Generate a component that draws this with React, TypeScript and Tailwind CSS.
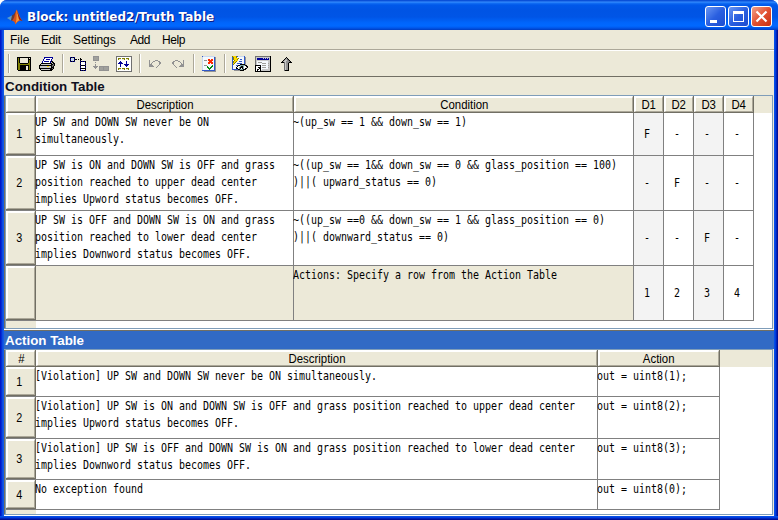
import React from "react";

const palette: Record<string, string> = {
  K: "#000000",
  O: "#808000",
  W: "#ffffff",
  G: "#a0a09c",
  D: "#707070",
  N: "#000098",
  B: "#3058c8",
  L: "#c8d8f0",
  P: "#f4f8fc",
  R: "#ff2a00",
  E: "#008a10",
  Y: "#ffd800",
  T: "#80a8a8",
  S: "#c8c8c8",
  C: "#ece9d8",
  A: "#929292",
};

function Pixels({ rows }: { rows: string[] }) {
  const rects: React.ReactElement[] = [];
  rows.forEach((row, y) => {
    let x = 0;
    while (x < row.length) {
      const c = row[x];
      let n = 1;
      while (row[x + n] === c) n++;
      if (palette[c]) rects.push(<rect key={x + "," + y} x={x} y={y} width={n} height={1} fill={palette[c]} />);
      x += n;
    }
  });
  const w = Math.max(...rows.map((r) => r.length));
  return (
    <svg width={w} height={rows.length} shapeRendering="crispEdges" className="block shrink-0">
      {rects}
    </svg>
  );
}

const save = [
  "KKKKKKKKKKKKKK",
  "KOKCCCCCCCCKCK",
  "KOKCCCCCCCCKKK",
  "KOKCCCCCCCCKOK",
  "KOKCCCCCCCCKOK",
  "KOKCCCCCCCCKOK",
  "KOOKKKKKKKKOOK",
  "KOOOOOOOOOOOOK",
  "KOOKKKKKKKKKOK",
  "KOOKKKKKKCCKOK",
  "KOOKKKKKKCCKOK",
  "KOOKKKKKKCCKOK",
  "KOOKKKKKKCCKOK",
  " KKKKKKKKKKKKK",
];
const printer = [
  "     NNNNNNNNN  ",
  "     NWWWWWWWN  ",
  "    NWWNNNNWN   ",
  "    NWWWWWWWN   ",
  "   NWNNNNNWNKK  ",
  "   NWWWWWWWNSKK ",
  "  KKKKKKKKKKKSKK",
  " KSSSSSSSSSSKKDK",
  "KKKKKKKKKKKKKDDK",
  "KSSSSSSSYYSSKDK ",
  "KSSSSSSSSSSSKKK ",
  "KKKKKKKKKKKKKDK ",
  " KSSSSSSSSSKKK  ",
  "  KKKKKKKKKKK   ",
];
const appendRow = [
  "NKNKN           ",
  "KLLLK     K     ",
  "NLLLNKK K KK    ",
  "KLLLK     K     ",
  "NKNKN     NKNKNK",
  "          KWWWWK",
  "          NWWWWN",
  "          KWWWWK",
  "          NKKKKN",
  "          KWWWWK",
  "          NWWWWN",
  "          KKKKKK",
  "          NWWWWK",
  "          KNKNKN",
];
const appendColumn = [
  "AAAAAA          ",
  "AGGGGA          ",
  "AGGGGA          ",
  "AGGGGA          ",
  "AAAAAA          ",
  "                ",
  "  A             ",
  "                ",
  "  A             ",
  "  A             ",
  "AAAAA AAAAAAAAAA",
  " AAA  AGGGAGGGGA",
  "  A   AGGGAGGGGA",
  "      AGGGAGGGGA",
  "      AAAAAAAAAA",
];
const compact = [
  "DDDDDDDDDDDDDDDD",
  "DWWWWWWWWWWWWWWD",
  "DWOOOWOOOWOOOWWD",
  "DWOCCWCCOWCCOWWD",
  "DWWWWWWWWWWWWWWD",
  "DWWWNWWWWWNWWWWD",
  "DWWNNNWWWWNWWWWD",
  "DWNNNNNWWWNWWWWD",
  "DWWWNWWWNNNNNWWD",
  "DWWWNWWWWNNNWWWD",
  "DWWWNWWWWWNWWWWD",
  "DWWWWWWWWWWWWWWD",
  "DWOOOWOOOWOOOWWD",
  "DWOCCWCCOWCCOWWD",
  "DWWWWWWWWWWWWWWD",
  "DDDDDDDDDDDDDDDD",
];
const undo = [
  "A     AAA   ",
  "A   AA   AA ",
  "A  A      AA",
  "A A       AA",
  "AAA       A ",
  "AAAA     A  ",
  "AAAAA   A   ",
  "       A    ",
];
const redo = undo.map((r) => r.split("").reverse().join(""));
const check = [
  "BLLLLLLLLLLLL  ",
  "LPPPPPPPPPPPBA ",
  "LPPPPPPPPPPPBA ",
  "LPPPPPRRPRRPBA ",
  "LPAAAPRRRRRPBA ",
  "LPPPPPPRRRPPBA ",
  "LPPPPPRRRRRPBA ",
  "LPPPPPRRPRRPBA ",
  "LPPPPPPPPPPPBA ",
  "LPAAAPPPPPEPBA ",
  "LPPPPEPPPEEPBA ",
  "LPPPPEEPEEPPBA ",
  "LPPPPPEEEPPPBA ",
  "LPPPPPPEPPPPBA ",
  "BBBBBBBBBBBBBA ",
  "  AAAAAAAAAAAA ",
];
const view = [
  "OYYYOBLLLLLLB   ",
  "BOYYOPPPPPPPBA  ",
  "BOYYYYOPPPPPBA  ",
  "BOYYYOPPBBPPBA  ",
  "BPOYYYPPPPPPBA  ",
  "BOYYOPPBBBPPBA  ",
  "BOYOPPPPPPPPBA  ",
  "BYOPPBBBBBPPBA  ",
  "BOPPPPPPKKKKKA  ",
  "BPPPBBKKTTTTTKK ",
  "BPPPPKWWTKKTWWKK",
  "BPPPKWWTKKKTWWSK",
  "BPPPKKWTKWKTWKK ",
  "BBBBBBKKTTTKKK  ",
  "  AAAAAAKKKK    ",
];
const windowIcon = [
  "DDDDDDDDDDDDDDDK",
  "DSSSSSSSSSSSSSSK",
  "DSNNNNNNSNSNSNSK",
  "DSNNNNNNNNNNNNSK",
  "DSSSSSSSSSSSSSSK",
  "DSPPPPPPPPPPPSSK",
  "DSPGGGGPPPPPPSSK",
  "DSPPPPPGGGGPPGSK",
  "DSPPPPPPPPPPPSSK",
  "KKKKKKPGGGGPPGSK",
  "KWWWWKPPPPPPPSSK",
  "KWWKKKPGGGGPPGSK",
  "KWWWKKPPPPPPPSSK",
  "KWKKWKPSSSSSSSSK",
  "KWKWWKSSSSSSSSSK",
  "KKKKKKKKKKKKKKKK",
];
const upArrow = [
  "      K      ",
  "     KGK     ",
  "    KGGDK    ",
  "   KGSSADK   ",
  "  KGSSAAADK  ",
  " KKKDSAADKKK ",
  "    DSAAK    ",
  "    DSAAK    ",
  "    DSAAK    ",
  "    DSAAK    ",
  "    DSAAK    ",
  "    DSAAK    ",
  "    DSAAK    ",
  "    DKKKK    ",
];

function Sep() {
  return <div className="h-[19px] w-[2px] shrink-0 border-l border-[#aca899] bg-white" />;
}

const ui = "font-['Liberation_Sans',Arial,sans-serif] text-[12px]";
const raised =
  "border-t-2 border-l-2 border-r border-b border-t-white border-l-white border-r-[#aca899] border-b-[#aca899] bg-[#ece9d8]";

function Mono({ children }: { children: string }) {
  return (
    <span className="-ml-px block w-max origin-left scale-x-[0.8305] font-['DejaVu_Sans_Mono',monospace] text-[12px] leading-[17px] whitespace-pre">
      {children}
    </span>
  );
}

function Lines({ text, className }: { text: string[]; className: string }) {
  return (
    <div className={"min-w-0 shrink-0 border-r border-b border-[#808080] pt-px " + className}>
      {text.map((t, i) => (
        <Mono key={i}>{t}</Mono>
      ))}
    </div>
  );
}

function Head({ children, className }: { children?: string; className: string }) {
  return (
    <div className={"h-[17px] shrink-0 border-r border-b border-[#716f64] " + className}>
      <div className={"flex h-full items-center justify-center pt-px leading-[12px] " + ui + " " + raised}>
        <span className="scale-x-[0.95]">{children}</span>
      </div>
    </div>
  );
}

function RowHead({ children }: { children?: string }) {
  return (
    <div className="w-[30px] shrink-0 border-b border-[#808080]">
      <div className="h-full border-r border-b border-[#716f64]">
        <div className={"flex h-full items-center justify-center pr-[3px] " + ui + " " + raised}>
          <span className="scale-x-[0.9]">{children}</span>
        </div>
      </div>
    </div>
  );
}

function Decision({ value, shaded }: { value: string; shaded: boolean }) {
  return (
    <div
      className={
        "flex w-[30px] shrink-0 items-center border-r border-b border-[#808080] pl-[11px] " + (shaded ? "bg-[#f3f3f3]" : "bg-white")
      }
    >
      <Mono>{value}</Mono>
    </div>
  );
}

const conditions = [
  {
    h: "h-[43px]",
    id: "1",
    desc: ["UP SW and DOWN SW never be ON", "simultaneously."],
    cond: ["~(up_sw == 1 && down_sw == 1)"],
    d: ["F", "-", "-", "-"],
    fill: "bg-white",
  },
  {
    h: "h-[55px]",
    id: "2",
    desc: ["UP SW is ON and DOWN SW is OFF and grass", "position reached to upper dead center", "implies Upword status becomes OFF."],
    cond: ["~((up_sw == 1&& down_sw == 0 && glass_position == 100)", ")||( upward_status == 0)"],
    d: ["-", "F", "-", "-"],
    fill: "bg-white",
  },
  {
    h: "h-[55px]",
    id: "3",
    desc: ["UP SW is OFF and DOWN SW is ON and grass", "position reached to lower dead center", "implies Downword status becomes OFF."],
    cond: ["~((up_sw ==0 && down_sw == 1 && glass_position == 0)", ")||( downward_status == 0)"],
    d: ["-", "-", "F", "-"],
    fill: "bg-white",
  },
  {
    h: "h-[55px]",
    id: "",
    desc: [],
    cond: ["Actions: Specify a row from the Action Table"],
    d: ["1", "2", "3", "4"],
    fill: "bg-[#ece9d8]",
  },
];

const actions = [
  { h: "h-[30px]", id: "1", desc: ["[Violation] UP SW and DOWN SW never be ON simultaneously."], act: "out = uint8(1);" },
  {
    h: "h-[42px]",
    id: "2",
    desc: [
      "[Violation] UP SW is ON and DOWN SW is OFF and grass position reached to upper dead center",
      "implies Upword status becomes OFF.",
    ],
    act: "out = uint8(2);",
  },
  {
    h: "h-[41px]",
    id: "3",
    desc: [
      "[Violation] UP SW is OFF and DOWN SW is ON and grass position reached to lower dead center",
      "implies Downword status becomes OFF.",
    ],
    act: "out = uint8(3);",
  },
  { h: "h-[30px]", id: "4", desc: ["No exception found"], act: "out = uint8(0);" },
];

function Logo() {
  return (
    <svg width="16" height="16" viewBox="0 0 16 16" className="shrink-0">
      <path d="M0 9 L5 6.5 L7 8.5 L4 11.5Z" fill="#5b9bc8" />
      <path d="M5 6.5 L7 5 L9.5 1 L8 9 L5 12 L4 11Z" fill="#6b3a34" />
      <path d="M9.5 0.5 C11.5 3 12.5 9 15.5 12 C13 11 11.5 11.5 8.5 15.5 C8 13 6.500 11.5 5 12 C7.500 10 8 4 9.500 .5Z" fill="#d85018" />
      <path d="M9.500 1 C9.500 5 10 10 8.500 15 C10.500 12 11.500 11 13 11 C11.500 8 10.500 3 9.500 1Z" fill="#f89838" />
      <path d="M10 2 C11.500 5 12.500 9.500 15.500 12 L12 10.500Z" fill="#8c1c10" />
    </svg>
  );
}

const capButton = "flex size-[21px] items-center justify-center rounded-[3px] border border-white";

export default function App() {
  return (
    <div className="h-[520px] w-[778px] overflow-hidden bg-white text-black">
      <div className="flex h-full flex-col overflow-hidden rounded-t-[7px] bg-[#0842d8]">
        <div className="flex h-[30px] shrink-0 items-center bg-[linear-gradient(180deg,#0a50d8_0px,#0a50d8_1px,#3a90ff_2px,#1470f4_3px,#0058ea_5px,#0054e4_10px,#0055e6_17px,#0066fc_23px,#0068ff_26px,#0056ea_28px,#003cc0_30px)] pr-[6px] pl-[7px]">
          <div className="pt-[3px]">
            <Logo />
          </div>
          <div className="grow pt-[3px] pl-[4px] font-['DejaVu_Sans',Verdana,sans-serif] text-[12px] leading-[16px] font-bold whitespace-nowrap text-white [text-shadow:1px_1px_0_#0a1883]">
            Block: untitled2/Truth Table
          </div>
          <div className="flex gap-[2px] pt-[3px]">
            <div className={capButton + " bg-linear-to-br from-[#6a95f2] via-[#2a5fe0] to-[#1c4cd0]"}>
              <div className="mt-[9px] mr-[5px] h-[3px] w-[7px] bg-white" />
            </div>
            <div className={capButton + " bg-linear-to-br from-[#6a95f2] via-[#2a5fe0] to-[#1c4cd0]"}>
              <div className="size-[11px] border border-t-[3px] border-white" />
            </div>
            <div className={capButton + " bg-linear-to-br from-[#f0a088] via-[#e25030] to-[#c83010]"}>
              <svg width="13" height="13" viewBox="0 0 13 13">
                <path d="M1.500 1.500 L11.500 11.500 M11.500 1.500 L1.500 11.500" stroke="#fff" strokeWidth="2.200" />
              </svg>
            </div>
          </div>
        </div>

        <div className="flex h-[486px] shrink-0">
          <div className="w-[4px] shrink-0 bg-[linear-gradient(90deg,#0018c8_0px,#0018c8_1px,#0842e0_2px,#1460e8_4px)]" />
          <div className="flex w-[770px] shrink-0 flex-col bg-[#ece9d8]">
            <div className={"flex h-[20px] shrink-0 items-center border-b border-[#aca899] pl-[6px] leading-[14px] " + ui}>
              <span className="w-[31px]">File</span>
              <span className="w-[32px] tracking-[-0.2px]">Edit</span>
              <span className="w-[57px] tracking-[-0.1px]">Settings</span>
              <span className="w-[32px] tracking-[-0.5px]">Add</span>
              <span className="tracking-[-0.4px]">Help</span>
            </div>

            <div className="flex h-[27px] shrink-0 items-center border-t border-b border-t-white border-b-[#716f64] pl-[4px]">
              <Sep />
              <div className="ml-[7px]"><Pixels rows={save} /></div>
              <div className="ml-[8px]"><Pixels rows={printer} /></div>
              <div className="ml-[7px]"><Sep /></div>
              <div className="ml-[6px]"><Pixels rows={appendRow} /></div>
              <div className="ml-[7px]"><Pixels rows={appendColumn} /></div>
              <div className="ml-[7px]"><Pixels rows={compact} /></div>
              <div className="ml-[7px]"><Sep /></div>
              <div className="ml-[8px] pt-px"><Pixels rows={undo} /></div>
              <div className="ml-[11px] pt-px"><Pixels rows={redo} /></div>
              <div className="ml-[9px]"><Sep /></div>
              <div className="ml-[7px]"><Pixels rows={check} /></div>
              <div className="ml-[7px]"><Sep /></div>
              <div className="ml-[6px]"><Pixels rows={view} /></div>
              <div className="ml-[7px]"><Pixels rows={windowIcon} /></div>
              <div className="ml-[9px] pt-px"><Pixels rows={upArrow} /></div>
            </div>

            <div className="h-[18px] shrink-0 pt-px pl-px font-['Liberation_Sans',Arial,sans-serif] text-[13.33px] leading-[17px] font-bold text-[#101020]">
              Condition Table
            </div>
            <div className="flex h-[234px] w-[769px] shrink-0 flex-col border border-l-0 border-[#7f9db9] bg-white">
              <div className="flex h-full flex-col border-l border-l-[#716f64]">
                <div className="flex grow flex-col border-l border-l-[#7f9db9] bg-[linear-gradient(90deg,#ece9d8_30px,#ffffff_30px)]">
                  <div className="flex shrink-0 bg-[#ece9d8]">
                    <Head className="w-[30px]" />
                    <Head className="w-[258px]">Description</Head>
                    <Head className="w-[340px]">Condition</Head>
                    <Head className="w-[30px]">D1</Head>
                    <Head className="w-[30px]">D2</Head>
                    <Head className="w-[30px]">D3</Head>
                    <Head className="w-[30px]">D4</Head>
                  </div>
                  {conditions.map((r, i) => (
                    <div key={i} className={"flex shrink-0 " + r.h}>
                      <RowHead>{r.id}</RowHead>
                      <Lines className={"w-[258px] " + r.fill} text={r.desc} />
                      <Lines className={"w-[340px] " + r.fill} text={r.cond} />
                      {r.d.map((v, j) => (
                        <Decision key={j} value={v} shaded={j % 2 === 0} />
                      ))}
                    </div>
                  ))}
                </div>
              </div>
            </div>

            <div className="h-px shrink-0 bg-white" />
            <div className="h-[19px] shrink-0 border-t border-t-[#716f64] bg-[#316ac5] pt-px pl-px font-['Liberation_Sans',Arial,sans-serif] text-[13.33px] leading-[17px] font-bold text-white">
              Action Table
            </div>
            <div className="flex h-[166px] w-[769px] shrink-0 flex-col border border-l-0 border-[#7f9db9] bg-white">
              <div className="flex h-full flex-col border-l border-l-[#716f64]">
                <div className="flex grow flex-col border-l border-l-[#7f9db9] bg-[linear-gradient(90deg,#ece9d8_30px,#ffffff_30px)]">
                  <div className="flex shrink-0 bg-[#ece9d8]">
                    <Head className="w-[30px]">#</Head>
                    <Head className="w-[562px]">Description</Head>
                    <Head className="w-[122px]">Action</Head>
                  </div>
                  {actions.map((r, i) => (
                    <div key={i} className={"flex shrink-0 " + r.h}>
                      <RowHead>{r.id}</RowHead>
                      <Lines className="w-[562px] bg-white" text={r.desc} />
                      <Lines className="w-[122px] bg-white" text={[r.act]} />
                    </div>
                  ))}
                </div>
              </div>
            </div>
            <div className="h-px shrink-0 bg-white" />
          </div>
          <div className="w-[4px] shrink-0 bg-[linear-gradient(90deg,#0858f0_0px,#0044e0_1px,#0038d8_2px,#0010a0_3px,#00108c_4px)]" />
        </div>
        <div className="h-[4px] shrink-0 bg-[linear-gradient(180deg,#0858f0_0px,#0044e0_1px,#0038d8_2px,#0010a0_3px,#00108c_4px)]" />
      </div>
    </div>
  );
}
